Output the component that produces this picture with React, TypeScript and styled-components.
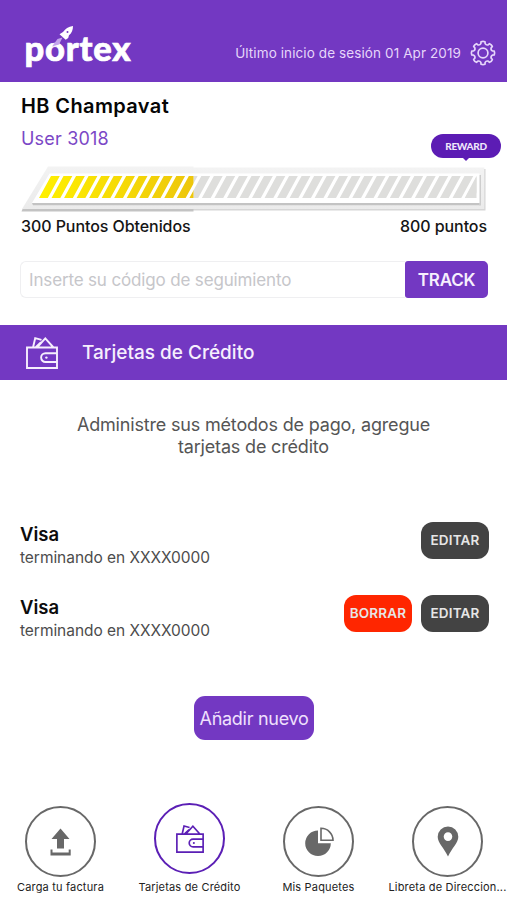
import React from "react";
import styled, { createGlobalStyle } from "styled-components";

const GlobalStyle = createGlobalStyle`
  * {
    box-sizing: border-box;
  }

  body {
    margin: 0;
    background: #fff;
    font-family: Inter, "Liberation Sans", sans-serif;
  }

  button,
  input {
    font-family: inherit;
  }
`;

const Screen = styled.div`
  display: flex;
  flex-direction: column;
  width: 507px;
  height: 900px;
  overflow: hidden;
  background: #fff;
`;

const Header = styled.header`
  display: flex;
  align-items: flex-start;
  justify-content: space-between;
  height: 82px;
  padding: 22px 11px 0 20px;
  background: #7338c2;
`;

const LastLogin = styled.div`
  display: flex;
  align-items: center;
  gap: 9px;
  padding-top: 18px;
  color: #e6d6fa;
`;

const Label = styled.span<{ size: number; weight?: number; color?: string; spacing?: number }>`
  font-size: ${(p) => p.size}px;
  font-weight: ${(p) => p.weight || 400};
  color: ${(p) => p.color || "inherit"};
  letter-spacing: ${(p) => p.spacing || 0}px;
  line-height: 24px;
  white-space: nowrap;
`;

const Profile = styled.section`
  display: flex;
  flex-direction: column;
  height: 179px;
  padding: 12px 20px 0 21px;
`;

const UserRow = styled.div`
  display: flex;
  justify-content: space-between;
  height: 35px;
  margin-top: 9px;
`;

const Reward = styled.div`
  position: relative;
  width: 70px;
  height: 24px;
  margin: 7px -14px 0 0;
  border-radius: 12px;
  background: #5c1cb4;
  color: #efe6fb;
  font: 900 10px/24px Lato, sans-serif;
  letter-spacing: -0.35px;
  text-align: center;

  &::after {
    content: "";
    position: absolute;
    left: 32px;
    top: 24px;
    border: 3px solid transparent;
    border-top-color: #5c1cb4;
    border-bottom: 0;
  }
`;

const Bar = styled.svg`
  display: block;
  flex: none;
  width: 468px;
  height: 50px;
  margin-top: 2px;
`;

const Points = styled.div`
  display: flex;
  justify-content: space-between;
`;

const Search = styled.form`
  display: flex;
  height: 37px;
  margin: 0 19px 27px 20px;
`;

const SearchInput = styled.input`
  flex: 1;
  min-width: 0;
  padding: 0 8px;
  border: 1px solid #efeff1;
  border-right: 0;
  border-radius: 6px 0 0 6px;
  outline: none;
  font-size: 17px;
  letter-spacing: -0.15px;

  &::placeholder {
    color: #c6c6ca;
    opacity: 1;
  }
`;

const TrackButton = styled.button`
  width: 83px;
  padding: 0;
  border: 0;
  border-radius: 3px 5px 5px 3px;
  background: #7338c2;
  color: #f6effd;
  font-size: 17px;
  font-weight: 600;
  letter-spacing: -0.2px;
`;

const Banner = styled.div`
  display: flex;
  align-items: center;
  gap: 24px;
  height: 55px;
  padding-left: 26px;
  background: #7338c2;
  color: #f6effd;
`;

const Intro = styled.p`
  height: 134px;
  margin: 0;
  padding-top: 34px;
  color: #555;
  font-size: 18px;
  letter-spacing: -0.18px;
  line-height: 22px;
  text-align: center;
`;

const CardRow = styled.div`
  display: flex;
  justify-content: space-between;
  height: 73px;
  padding: 8px 18px 0 20px;
`;

const CardInfo = styled.div`
  display: flex;
  flex-direction: column;
`;

const Actions = styled.div`
  display: flex;
  gap: 9px;
`;

const ActionButton = styled.button<{ danger?: boolean }>`
  width: 68px;
  height: 37px;
  padding: 0 0 2px;
  border: 0;
  border-radius: 12px;
  background: ${(p) => (p.danger ? "#ff2600" : "#434343")};
  color: #e6e6e6;
  font-size: 13.5px;
  font-weight: 600;
  letter-spacing: 0.2px;
`;

const AddButton = styled.button`
  width: 120px;
  height: 44px;
  margin: 36px auto 0 194px;
  padding: 0;
  border: 0;
  border-radius: 11px;
  background: #7338c2;
  color: #efe0fd;
  font-size: 18px;
  letter-spacing: -0.28px;
`;

const Nav = styled.nav`
  display: grid;
  grid-template-columns: repeat(4, 129px);
  height: 97px;
  margin: auto 0 1px -4px;
`;

const NavItem = styled.a`
  display: flex;
  flex-direction: column;
  align-items: center;
  justify-content: flex-end;
`;

const Circle = styled.div<{ active?: boolean }>`
  display: flex;
  align-items: center;
  justify-content: center;
  width: 71px;
  height: 71px;
  margin-bottom: ${(p) => (p.active ? 1 : -2)}px;
  border: 2.5px solid ${(p) => (p.active ? "#5b1fb5" : "#686868")};
  border-radius: 50%;
  color: ${(p) => (p.active ? "#5b1fb5" : "#686868")};
`;

const Logo = () => (
  <svg width="116" height="50" viewBox="20 22 116 50" aria-label="portex">
    <text
      x="24.6"
      y="61"
      fill="#fff"
      stroke="#fff"
      strokeWidth="0.7"
      fontFamily="Lato"
      fontWeight="900"
      fontSize="34.5"
      textLength="106"
    >
      portex
    </text>
    <path d="M62.5 37.5L57.5 39L52 46.5L59 44.5Z" fill="#c3a4ec" />
    <path
      d="M73 26C68.5 26.6 65 29 63 32L59.5 34.3L61.8 36.2L65.7 39.8L68.2 38L69 35.2C71.8 33 73 30 73 26Z"
      fill="#fff"
    />
    <circle cx="67.5" cy="32" r="1" fill="#7338c2" />
  </svg>
);

const Gear = () => (
  <svg width="26" height="26" viewBox="-13 -13 26 26" fill="none" stroke="currentColor" strokeWidth="1.7" strokeLinejoin="round">
    <circle r="4.9" />
    <path
      d={
        [0, 45, 90, 135, 180, 225, 270, 315]
          .map((deg, i) => {
            const at = (r: number, off: number) => {
              const a = ((deg + off) * Math.PI) / 180;
              return `${(r * Math.cos(a)).toFixed(2)} ${(r * Math.sin(a)).toFixed(2)}`;
            };
            return `${i ? "L" : "M"}${at(11.4, -10)}Q${at(12, 0)} ${at(11.4, 10)}L${at(9.6, 13)}Q${at(8.2, 22.5)} ${at(9.6, 32)}`;
          })
          .join("") + "Z"
      }
    />
  </svg>
);

const Wallet = ({ width }: { width: number }) => (
  <svg width={width} height={width} viewBox="0 0 32 32" fill="none" stroke="currentColor" strokeWidth="1.9">
    <path d="M1 10.5H31V31H1Z M7 10.5L9.2 1.2L15.5 2.8 M11 10.5L19.3 1.4L27.5 10.5 M9.5 10.5L15 5.3" />
    <path d="M31 16.2H19.5A4.3 4.3 0 0 0 19.5 25H31" />
    <circle cx="20.4" cy="20.6" r="1.2" fill="currentColor" stroke="none" />
  </svg>
);

const Upload = () => (
  <svg width="22" height="28" viewBox="0 0 22 28" fill="currentColor">
    <path d="M10.5 0.5L19.5 11H14V20.5H7V11H1.5Z" />
    <path d="M0.5 21.5H2.5V24.5H18.7V21.5H20.7V27.5H0.5Z" />
  </svg>
);

const Pie = () => (
  <svg width="30" height="30" viewBox="0 0 30 30" fill="currentColor">
    <path d="M14 3.5A12.8 12.8 0 1 0 26.8 16.3H14Z" />
    <path d="M17 1.3A12 12 0 0 1 29 13.3H17Z" fill="none" stroke="currentColor" strokeWidth="1.6" />
  </svg>
);

const Pin = () => (
  <svg width="22" height="31" viewBox="0 0 22 31" fill="currentColor" fillRule="evenodd">
    <path d="M11 0.5A10.3 10.3 0 0 0 0.7 10.8C0.7 17 7 22 11 30.5C15 22 21.3 17 21.3 10.8A10.3 10.3 0 0 0 11 0.5ZM11 6.3A4.3 4.3 0 1 1 11 14.9A4.3 4.3 0 0 1 11 6.3Z" />
  </svg>
);

const stripes = Array.from({ length: 35 }, (_, i) => 39 + i * 12.53);

const stripePath = stripes.map((x) => `M${x} 198L${x + 12} 176H${x + 20.8}L${x + 8.8} 198Z`).join("");

const ProgressBar = () => (
  <Bar viewBox="21 164 468 50">
    <defs>
      <linearGradient id="gold" gradientUnits="userSpaceOnUse" x1="39" x2="194" y1="0" y2="0">
        <stop offset="0" stopColor="#fff000" />
        <stop offset="1" stopColor="#edc60c" />
      </linearGradient>
      <linearGradient id="edge" x1="0" x2="0" y1="0" y2="1">
        <stop offset="0" stopColor="#f3f3f3" />
        <stop offset="1" stopColor="#ebebeb" />
      </linearGradient>
      <clipPath id="done">
        <rect x="21" y="164" width="172.5" height="50" />
      </clipPath>
      <clipPath id="left">
        <path d="M193.5 164H476.5V214H193.5Z" />
      </clipPath>
    </defs>
    <path d="M193 169H485.5V210.5H193Z" fill="#d6d6d6" />
    <path d="M193 167.5H484.3V209H193Z" fill="url(#edge)" />
    <path d="M48 166.5H193.5V209H22Z" fill="url(#edge)" />
    <path d="M22.5 209H193.5V211.5H21.5Z" fill="#c3c3c3" />
    <path d="M32 203H481V173.5V205.2H33Z" fill="#c3c3c3" />
    <path d="M479 175H481V205.2H479Z" fill="#cecece" />
    <path d="M49.5 173.5H479.5V203H32Z" fill="#fff" />
    <path d={stripePath} fill="#dededc" clipPath="url(#left)" />
    <path d="M476.5 176V198H464.8Z" fill="#dededc" />
    <path d={stripePath} fill="url(#gold)" clipPath="url(#done)" />
  </Bar>
);

const App: React.FC = () => {
  return (
    <Screen>
      <GlobalStyle />
      <Header>
        <Logo />
        <LastLogin>
          <Label size={13.5} spacing={0.1}>Último inicio de sesión 01 Apr 2019</Label>
          <Gear />
        </LastLogin>
      </Header>
      <Profile>
        <Label size={20} weight={600} color="#050505" spacing={0.38}>HB Champavat</Label>
        <UserRow>
          <Label size={18} color="#7b47c6" spacing={0.2}>User 3018</Label>
          <Reward>REWARD</Reward>
        </UserRow>
        <ProgressBar />
        <Points>
          <Label size={16} weight={500} color="#151515" spacing={-0.07}>300 Puntos Obtenidos</Label>
          <Label size={16} weight={500} color="#151515" spacing={-0.07}>800 puntos</Label>
        </Points>
      </Profile>
      <Search>
        <SearchInput placeholder="Inserte su código de seguimiento" />
        <TrackButton type="button">TRACK</TrackButton>
      </Search>
      <Banner>
        <Wallet width={32} />
        <Label size={19} weight={500}>Tarjetas de Crédito</Label>
      </Banner>
      <Intro>
        Administre sus métodos de pago, agregue
        <br />
        tarjetas de crédito
      </Intro>
      <CardRow>
        <CardInfo>
          <Label size={18.5} weight={600} color="#0c0c0c">Visa</Label>
          <Label size={15.5} color="#4c4c4c" spacing={-0.05}>terminando en XXXX0000</Label>
        </CardInfo>
        <Actions>
          <ActionButton>EDITAR</ActionButton>
        </Actions>
      </CardRow>
      <CardRow>
        <CardInfo>
          <Label size={18.5} weight={600} color="#0c0c0c">Visa</Label>
          <Label size={15.5} color="#4c4c4c" spacing={-0.05}>terminando en XXXX0000</Label>
        </CardInfo>
        <Actions>
          <ActionButton danger>BORRAR</ActionButton>
          <ActionButton>EDITAR</ActionButton>
        </Actions>
      </CardRow>
      <AddButton>Añadir nuevo</AddButton>
      <Nav>
        <NavItem>
          <Circle>
            <Upload />
          </Circle>
          <Label size={11} color="#222" spacing={0.18}>Carga tu factura</Label>
        </NavItem>
        <NavItem>
          <Circle active>
            <Wallet width={28} />
          </Circle>
          <Label size={11} color="#222" spacing={0.18}>Tarjetas de Crédito</Label>
        </NavItem>
        <NavItem>
          <Circle>
            <Pie />
          </Circle>
          <Label size={11} color="#222" spacing={0.18}>Mis Paquetes</Label>
        </NavItem>
        <NavItem>
          <Circle>
            <Pin />
          </Circle>
          <Label size={11} color="#222" spacing={0.18}>Libreta de Direccion...</Label>
        </NavItem>
      </Nav>
    </Screen>
  );
};

export default App;
